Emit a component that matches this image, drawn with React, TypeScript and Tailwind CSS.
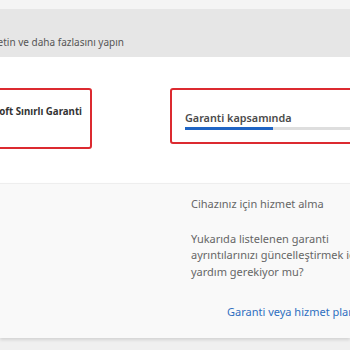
import React from "react";

export default function App() {
  const font = { fontFamily: '"Noto Sans", "Open Sans", sans-serif' };
  return (
    <div className="w-[350px] h-[350px] overflow-hidden bg-[#f0f0f0]" style={font}>
      <div className="h-[9px] bg-[#f4f4f4]" />
      <div className="h-[48px] bg-[#e6e6e6] flex items-end pb-[7px]">
        <div className="w-[124px] overflow-hidden flex justify-end">
          <span className="whitespace-nowrap text-[10px] text-[#555]">Cihazınızı kaydetin ve daha fazlasını yapın</span>
        </div>
      </div>
      <div className="h-[126px] bg-white flex items-start pt-[31px]">
        <div className="w-[96px] -ml-[4px] h-[61px] border-2 border-[#dc2a30] rounded-[3px] flex items-center justify-end pr-[8px] overflow-hidden pb-[13px] shrink-0">
          <span className="whitespace-nowrap text-[9.7px] font-bold text-[#333]">Microsoft Sınırlı Garanti</span>
        </div>
        <div className="ml-[78px] w-[200px] h-[56px] border-2 border-[#dc2a30] rounded-[3px] shrink-0 flex flex-col justify-end pl-[13px] pb-[12px]">
          <span className="text-[10.8px] font-semibold text-[#4a4a4a] leading-[12px]">Garanti kapsamında</span>
          <div className="mt-[3px] h-[3px] bg-[#dedede] flex">
            <div className="w-[88px] bg-[#1f64c4]" />
          </div>
        </div>
      </div>
      <div className="h-[155px] bg-[#f9f9f9] border-t border-[#eeeeee] shadow-[0_2px_3px_rgba(0,0,0,0.12)] flex">
        <div className="ml-[191px] pt-[12px] w-[200px] shrink-0 text-[11px] text-[#666] leading-[16.5px]">
          <div className="whitespace-nowrap">Cihazınız için hizmet alma</div>
          <div className="mt-[18px] whitespace-nowrap">Yukarıda listelenen garanti</div>
          <div className="whitespace-nowrap">ayrıntılarınızı güncelleştirmek için</div>
          <div className="whitespace-nowrap">yardım gerekiyor mu?</div>
          <div className="mt-[24px] ml-[36px] whitespace-nowrap text-[#2f6fc0]">Garanti veya hizmet planı ekle</div>
        </div>
      </div>
    </div>
  );
}
